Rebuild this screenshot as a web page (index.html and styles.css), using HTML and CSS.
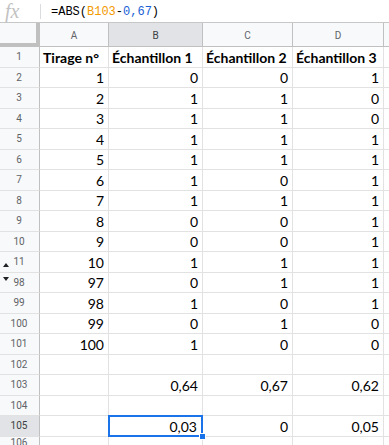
FILE: index.html
```html
<!DOCTYPE html>
<html lang="fr">
<head>
<meta charset="utf-8">
<title>Feuille</title>
<link rel="stylesheet" href="styles.css">
</head>
<body>
<div class="fbar">
  <span class="fx">fx</span>
  <span class="fsep"></span>
  <span class="formula">=ABS(<span class="ref">B103</span>-<span class="num">0,67</span>)</span>
</div>
<div class="grid">
  <div class="corner"></div><div class="ch">A</div><div class="ch sel">B</div><div class="ch">C</div><div class="ch">D</div><div class="ch last"></div>

  <div class="rh">1</div><div class="c b">Tirage n°</div><div class="c b">Échantillon 1</div><div class="c b">Échantillon 2</div><div class="c b">Échantillon 3</div><div class="c"></div>
  <div class="rh">2</div><div class="c n">1</div><div class="c n">0</div><div class="c n">0</div><div class="c n">1</div><div class="c"></div>
  <div class="rh">3</div><div class="c n">2</div><div class="c n">1</div><div class="c n">1</div><div class="c n">0</div><div class="c"></div>
  <div class="rh">4</div><div class="c n">3</div><div class="c n">1</div><div class="c n">1</div><div class="c n">0</div><div class="c"></div>
  <div class="rh">5</div><div class="c n">4</div><div class="c n">1</div><div class="c n">1</div><div class="c n">1</div><div class="c"></div>
  <div class="rh">6</div><div class="c n">5</div><div class="c n">1</div><div class="c n">1</div><div class="c n">1</div><div class="c"></div>
  <div class="rh">7</div><div class="c n">6</div><div class="c n">1</div><div class="c n">0</div><div class="c n">1</div><div class="c"></div>
  <div class="rh">8</div><div class="c n">7</div><div class="c n">1</div><div class="c n">1</div><div class="c n">1</div><div class="c"></div>
  <div class="rh">9</div><div class="c n">8</div><div class="c n">0</div><div class="c n">0</div><div class="c n">1</div><div class="c"></div>
  <div class="rh">10</div><div class="c n">9</div><div class="c n">0</div><div class="c n">0</div><div class="c n">1</div><div class="c"></div>
  <div class="rh">11<span class="arr up"></span></div><div class="c n">10</div><div class="c n">1</div><div class="c n">1</div><div class="c n">1</div><div class="c"></div>
  <div class="rh">98<span class="arr down"></span></div><div class="c n">97</div><div class="c n">0</div><div class="c n">1</div><div class="c n">1</div><div class="c"></div>
  <div class="rh">99</div><div class="c n">98</div><div class="c n">1</div><div class="c n">0</div><div class="c n">1</div><div class="c"></div>
  <div class="rh">100</div><div class="c n">99</div><div class="c n">0</div><div class="c n">1</div><div class="c n">0</div><div class="c"></div>
  <div class="rh">101</div><div class="c n">100</div><div class="c n">1</div><div class="c n">0</div><div class="c n">0</div><div class="c"></div>
  <div class="rh">102</div><div class="c"></div><div class="c"></div><div class="c"></div><div class="c"></div><div class="c"></div>
  <div class="rh">103</div><div class="c"></div><div class="c n">0,64</div><div class="c n">0,67</div><div class="c n">0,62</div><div class="c"></div>
  <div class="rh">104</div><div class="c"></div><div class="c"></div><div class="c"></div><div class="c"></div><div class="c"></div>
  <div class="rh sel">105</div><div class="c"></div><div class="c n active">0,03<span class="handle"></span></div><div class="c n">0</div><div class="c n">0,05</div><div class="c"></div>
  <div class="rh">106</div><div class="c"></div><div class="c"></div><div class="c"></div><div class="c"></div><div class="c"></div>
</div>
</body>
</html>
```
FILE: styles.css
```css
* { box-sizing: border-box; }
html, body { margin: 0; padding: 0; background: #fff; overflow: hidden; }
body { width: 389px; height: 445px; font-family: Lato, "Liberation Sans", sans-serif; }

.fbar {
  height: 23px;
  display: flex;
  align-items: center;
  border-bottom: 1px solid #c7c7c7;
}
.fx {
  width: 36px;
  padding-left: 5px;
  font-family: "Liberation Serif", serif;
  font-style: italic;
  font-size: 20px;
  color: #c2c2c2;
  line-height: 22px;
}
.fsep {
  width: 1px;
  height: 15px;
  background: #dadce0;
  margin-left: 4px;
  margin-right: 10px;
}
.formula {
  font-family: "Liberation Mono", monospace;
  font-size: 12px;
  color: #000;
  padding-top: 1px;
}
.ref { color: #f29900; }
.num { color: #1a5fd6; }

.grid {
  display: grid;
  grid-template-columns: 40px 69px 94px 90px 91px 1fr;
  grid-template-rows: 24px repeat(19, 20.5px);
}
.corner {
  background: #f8f9fa;
  border-right: 4px solid #c0c0c0;
  border-bottom: 4px solid #c0c0c0;
}
.ch {
  background: #f8f9fa;
  border-right: 1px solid #c0c0c0;
  border-bottom: 1px solid #c0c0c0;
  font-family: Roboto, "Liberation Sans", sans-serif;
  font-size: 10px;
  color: #5f6368;
  display: flex;
  align-items: center;
  justify-content: center;
  padding-top: 1px;
}
.ch.sel { background: #e1e3e6; color: #3c4043; }
.ch.last { border-right: none; }
.rh {
  position: relative;
  background: #f8f9fa;
  border-right: 1px solid #c0c0c0;
  border-bottom: 1px solid #e2e2e2;
  font-family: Roboto, "Liberation Sans", sans-serif;
  font-size: 10px;
  color: #5f6368;
  display: flex;
  align-items: center;
  justify-content: center;
  padding-right: 1px;
}
.rh.sel { background: #e1e3e6; color: #3c4043; }
.arr {
  position: absolute;
  left: 3px;
  width: 0;
  height: 0;
  border-left: 3.5px solid transparent;
  border-right: 3.5px solid transparent;
}
.arr.up { bottom: 5px; border-bottom: 4px solid #202124; }
.arr.down { top: 4px; border-top: 4px solid #202124; }

.c {
  position: relative;
  border-right: 1px solid #e2e2e2;
  border-bottom: 1px solid #e2e2e2;
  font-size: 14px;
  color: #000;
  display: flex;
  align-items: flex-end;
  padding: 0 4px 1px 3px;
  white-space: nowrap;
  line-height: 17px;
}
.c.b { font-weight: 700; }
.c.n { justify-content: flex-end; }
.c.active {
  border: 2px solid #1a73e8;
  margin: -1px 0 0 -1px;
  padding: 0 4px 0 3px;
  z-index: 2;
}
.handle {
  position: absolute;
  right: -5px;
  bottom: -5px;
  width: 7px;
  height: 7px;
  background: #1a73e8;
  border: 1px solid #fff;
  z-index: 3;
}
```
